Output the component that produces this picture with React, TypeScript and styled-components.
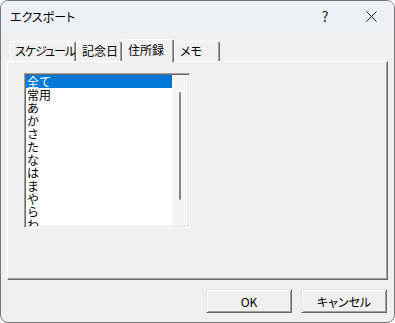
import styled, { createGlobalStyle } from "styled-components";

const GlobalStyle = createGlobalStyle`
  body {
    margin: 0;
    background: #ffffff;
    font-family: "Noto Sans CJK JP", "Noto Sans", sans-serif;
  }
`;

const Window = styled.div`
  width: 395px;
  height: 323px;
  box-sizing: border-box;
  border: 1px solid #767676;
  border-radius: 8px;
  overflow: hidden;
  display: flex;
  flex-direction: column;
  background: #f0f0f0;
`;

const TitleBar = styled.div`
  height: 30px;
  display: flex;
  align-items: center;
  background: #eef2f8;
`;

const Title = styled.div`
  flex: 1;
  padding-left: 9px;
  font-size: 12px;
  color: #000;
  font-feature-settings: "palt";
`;

const TitleButton = styled.div`
  width: 46px;
  height: 100%;
  display: flex;
  align-items: center;
  justify-content: center;
  font-size: 14px;
  color: #1a1a1a;
`;

const Body = styled.div`
  flex: 1;
  display: flex;
  flex-direction: column;
  padding: 8px 6px 9px 6px;
`;

const TabRow = styled.div`
  height: 22px;
  display: flex;
  align-items: flex-end;
  padding-left: 3px;
  position: relative;
  z-index: 1;
`;

const Tab = styled.div<{ $active?: boolean; $w: number; $tight?: boolean }>`
  box-sizing: border-box;
  width: ${(p) => p.$w}px;
  height: ${(p) => (p.$active ? 23 : 20)}px;
  margin-bottom: ${(p) => (p.$active ? -1 : 0)}px;
  padding: ${(p) => (p.$active ? 2 : 1)}px 0 0 ${(p) => (p.$tight ? 4 : 5)}px;
  background: #f0f0f0;
  border-top: 1px solid #ffffff;
  border-left: 1px solid #ffffff;
  border-right: 1px solid #696969;
  box-shadow: inset -1px 0 0 #a0a0a0;
  border-radius: 2px 2px 0 0;
  font-size: 12px;
  line-height: 16px;
  letter-spacing: ${(p) => (p.$tight ? -1 : 0)}px;
  color: #000;
  font-feature-settings: "palt";
  white-space: nowrap;
  overflow: hidden;
`;

const Panel = styled.div`
  height: 219px;
  box-sizing: border-box;
  border-top: 1px solid #ffffff;
  border-left: 1px solid #ffffff;
  border-right: 1px solid #696969;
  border-bottom: 1px solid #696969;
  box-shadow: inset -1px -1px 0 #a0a0a0;
  padding: 11px 0 0 16px;
`;

const ListBox = styled.div`
  width: 166px;
  height: 155px;
  box-sizing: border-box;
  display: flex;
  border-top: 1px solid #a0a0a0;
  border-left: 1px solid #a0a0a0;
  border-right: 1px solid #ffffff;
  border-bottom: 1px solid #ffffff;
  box-shadow: inset 1px 1px 0 #696969, inset -1px -1px 0 #e3e3e3;
  padding: 1px;
  background: #ffffff;
`;

const Items = styled.div`
  flex: 1;
  overflow: hidden;
  background: #ffffff;
`;

const Item = styled.div<{ $selected?: boolean }>`
  height: 13px;
  line-height: 13px;
  font-size: 12px;
  padding-left: 1px;
  color: ${(p) => (p.$selected ? "#ffffff" : "#000000")};
  background: ${(p) => (p.$selected ? "#0078d7" : "transparent")};
`;

const Track = styled.div`
  width: 16px;
  background: #f4f4f4;
  display: flex;
  flex-direction: column;
  align-items: center;
`;

const Thumb = styled.div`
  width: 2px;
  height: 108px;
  margin-top: 17px;
  border-radius: 1px;
  background: #858585;
`;

const ButtonRow = styled.div`
  display: flex;
  justify-content: flex-end;
  gap: 9px;
  margin-top: 9px;
  padding-right: 1px;
`;

const Button = styled.button`
  width: 86px;
  height: 24px;
  box-sizing: border-box;
  background: #f0f0f0;
  border: 1px solid;
  border-color: #e3e3e3 #696969 #696969 #e3e3e3;
  box-shadow: inset 1px 1px 0 #ffffff, inset -1px -1px 0 #a0a0a0;
  font-family: "Noto Sans CJK JP", sans-serif;
  font-size: 12px;
  color: #000;
  padding: 0;
  font-feature-settings: "palt";
`;

const tabs = [
  { label: "スケジュール", w: 66, tight: true },
  { label: "記念日", w: 46 },
  { label: "住所録", w: 52, active: true },
  { label: "メモ", w: 46 },
];

const items = ["全て", "常用", "あ", "か", "さ", "た", "な", "は", "ま", "や", "ら", "わ"];

export default function App() {
  return (
    <>
      <GlobalStyle />
      <Window>
        <TitleBar>
          <Title>エクスポート</Title>
          <TitleButton>?</TitleButton>
          <TitleButton>
            <svg width="11" height="11" viewBox="0 0 11 11">
              <path d="M0.5 0.5 L10.5 10.5 M10.5 0.5 L0.5 10.5" stroke="#1a1a1a" strokeWidth="1" />
            </svg>
          </TitleButton>
        </TitleBar>
        <Body>
          <TabRow>
            {tabs.map((t) => (
              <Tab key={t.label} $w={t.w} $active={t.active} $tight={t.tight}>
                {t.label}
              </Tab>
            ))}
          </TabRow>
          <Panel>
            <ListBox>
              <Items>
                {items.map((it, i) => (
                  <Item key={it} $selected={i === 0}>
                    {it}
                  </Item>
                ))}
              </Items>
              <Track>
                <Thumb />
              </Track>
            </ListBox>
          </Panel>
          <ButtonRow>
            <Button>OK</Button>
            <Button>キャンセル</Button>
          </ButtonRow>
        </Body>
      </Window>
    </>
  );
}
